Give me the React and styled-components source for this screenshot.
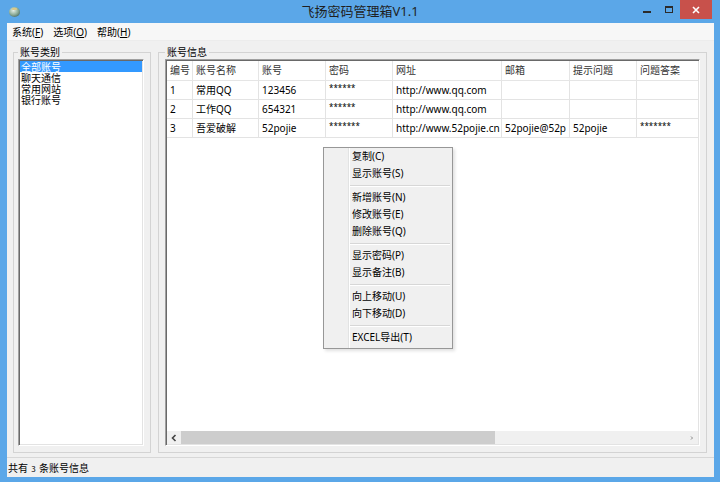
import React from 'react';
import styled, { createGlobalStyle } from 'styled-components';

const FONT = '"Noto Sans", "Noto Sans CJK SC", sans-serif';

const columns = [
  { title: '编号', width: 26 },
  { title: '账号名称', width: 66 },
  { title: '账号', width: 67 },
  { title: '密码', width: 67 },
  { title: '网址', width: 109 },
  { title: '邮箱', width: 68 },
  { title: '提示问题', width: 67 },
  { title: '问题答案', width: 80 },
];

const rows = [
  ['1', '常用QQ', '123456', '******', 'http://www.qq.com', '', '', ''],
  ['2', '工作QQ', '654321', '******', 'http://www.qq.com', '', '', ''],
  ['3', '吾爱破解', '52pojie', '*******', 'http://www.52pojie.cn', '52pojie@52p', '52pojie', '*******'],
];

const categories = ['全部账号', '聊天通信', '常用网站', '银行账号'];

const menuGroups = [
  ['复制(C)', '显示账号(S)'],
  ['新增账号(N)', '修改账号(E)', '删除账号(Q)'],
  ['显示密码(P)', '显示备注(B)'],
  ['向上移动(U)', '向下移动(D)'],
  ['EXCEL导出(T)'],
];

const App = () => {
  return (
    <>
      <GlobalStyle />
      <Window>
        <TitleBar>
          <TitleLeft>
            <AppIcon />
          </TitleLeft>
          <Title>飞扬密码管理箱V1.1</Title>
          <Controls>
            <CtrlButton>
              <svg width="10" height="10" viewBox="0 0 10 10">
                <rect x="1" y="6" width="8" height="2" fill="#2b2b2b" />
              </svg>
            </CtrlButton>
            <CtrlButton>
              <svg width="10" height="10" viewBox="0 0 10 10">
                <rect x="1.5" y="1.5" width="7" height="6" fill="none" stroke="#2b2b2b" strokeWidth="1" />
                <rect x="1" y="1" width="8" height="2" fill="#2b2b2b" />
              </svg>
            </CtrlButton>
            <CloseButton>
              <svg width="10" height="10" viewBox="0 0 10 10">
                <path d="M2 2 L8 8 M8 2 L2 8" stroke="#fff" strokeWidth="1.6" />
              </svg>
            </CloseButton>
          </Controls>
        </TitleBar>

        <Client>
          <MenuBar>
            <MenuItem>系统(<u>F</u>)</MenuItem>
            <MenuItem>选项(<u>O</u>)</MenuItem>
            <MenuItem>帮助(<u>H</u>)</MenuItem>
          </MenuBar>

          <Body>
            <GroupBox $width={138}>
              <Legend>账号类别</Legend>
              <ListBox>
                {categories.map((c, i) => (
                  <ListItem key={c} $selected={i === 0}>{c}</ListItem>
                ))}
              </ListBox>
            </GroupBox>

            <GroupBox $grow>
              <Legend>账号信息</Legend>
              <ListView>
                <Grid>
                  <HeaderRow>
                    {columns.map((col) => (
                      <HeaderCell key={col.title} $width={col.width}>{col.title}</HeaderCell>
                    ))}
                  </HeaderRow>
                  {rows.map((r) => (
                    <Row key={r[0]}>
                      {r.map((v, i) => (
                        <Cell key={i} $width={columns[i].width} $stars={v.startsWith('*')}>{v}</Cell>
                      ))}
                    </Row>
                  ))}
                </Grid>
                <HScroll>
                  <ArrowBtn>
                    <svg width="8" height="8" viewBox="0 0 8 8">
                      <path d="M5.5 1 L2.5 4 L5.5 7" fill="none" stroke="#444" strokeWidth="1.6" />
                    </svg>
                  </ArrowBtn>
                  <Thumb />
                  <Track />
                  <ArrowBtn>
                    <svg width="8" height="8" viewBox="0 0 8 8">
                      <path d="M3 2.5 L4.5 4 L3 5.5" fill="none" stroke="#888" strokeWidth="1" />
                    </svg>
                  </ArrowBtn>
                </HScroll>
              </ListView>
            </GroupBox>
          </Body>

          <StatusBar>共有 <Small>3</Small> 条账号信息</StatusBar>
        </Client>

        <ContextMenu>
          {menuGroups.map((group, gi) => (
            <React.Fragment key={gi}>
              {gi > 0 && <Separator />}
              {group.map((item) => (
                <CtxItem key={item}>{item}</CtxItem>
              ))}
            </React.Fragment>
          ))}
        </ContextMenu>
      </Window>
    </>
  );
};

const AppIcon = () => (
  <svg width="13" height="13" viewBox="0 0 13 13">
    <defs>
      <radialGradient id="ic" cx="40%" cy="35%" r="70%">
        <stop offset="0" stopColor="#e6efe6" />
        <stop offset="0.6" stopColor="#8fae9a" />
        <stop offset="1" stopColor="#4f6f66" />
      </radialGradient>
    </defs>
    <ellipse cx="6.5" cy="7" rx="5.5" ry="5" fill="url(#ic)" />
    <rect x="4" y="3" width="5" height="2" rx="1" fill="#d9c98a" />
  </svg>
);

const GlobalStyle = createGlobalStyle`
  html, body {
    margin: 0;
    padding: 0;
    width: 720px;
    height: 482px;
    overflow: hidden;
  }
  body {
    font-family: ${FONT};
    font-size: 10px;
    color: #000;
  }
`;

const Window = styled.div`
  position: relative;
  width: 720px;
  height: 482px;
  background: #5ba7e8;
  display: flex;
  flex-direction: column;
`;

const TitleBar = styled.div`
  height: 23px;
  display: grid;
  grid-template-columns: 1fr auto 1fr;
  align-items: start;
`;

const TitleLeft = styled.div`
  display: flex;
  align-items: center;
  height: 22px;
  padding-left: 8px;
`;

const Title = styled.div`
  font-family: "Noto Sans", "Noto Sans CJK SC", sans-serif;
  font-size: 13px;
  line-height: 22px;
  color: #1f1f1f;
`;

const Controls = styled.div`
  display: flex;
  justify-content: flex-end;
  padding-right: 8px;
`;

const CtrlButton = styled.div`
  width: 22px;
  height: 19px;
  display: flex;
  align-items: center;
  justify-content: center;
`;

const CloseButton = styled(CtrlButton)`
  width: 32px;
  background: #c8514b;
`;

const Client = styled.div`
  flex: 1;
  margin: 0 6px 5px 7px;
  background: #f0f0f0;
  display: flex;
  flex-direction: column;
  min-height: 0;
`;

const MenuBar = styled.div`
  height: 17px;
  display: flex;
  align-items: center;
  background: #f7f7f7;
  border-bottom: 1px solid #ececec;

  u {
    text-decoration: underline;
  }
`;

const MenuItem = styled.div`
  padding: 0 5px;
  line-height: 16px;
`;

const Body = styled.div`
  flex: 1;
  display: flex;
  gap: 7px;
  padding: 4px 7px 4px 6px;
  min-height: 0;
`;

const GroupBox = styled.fieldset`
  box-sizing: border-box;
  margin: 0;
  padding: 0 6px 6px ${(p) => (p.$grow ? 6 : 4)}px;
  border: 1px solid #d3d3d3;
  width: ${(p) => (p.$width ? `${p.$width}px` : 'auto')};
  flex: ${(p) => (p.$grow ? 1 : 'none')};
  display: flex;
  flex-direction: column;
  min-width: 0;
`;

const Legend = styled.legend`
  padding: 0 2px;
  font-size: 10px;
  line-height: 14px;
`;

const sunken = `
  border-style: solid;
  border-width: 1px;
  border-color: #a0a0a0 #ffffff #ffffff #a0a0a0;
  box-shadow: inset 1px 1px 0 #696969, inset -1px -1px 0 #e3e3e3;
  padding: 1px;
`;

const ListBox = styled.div`
  flex: 1;
  background: #fff;
  ${sunken}
  display: flex;
  flex-direction: column;
`;

const ListItem = styled.div`
  height: 11px;
  line-height: 11px;
  padding-left: 1px;
  overflow: hidden;
  font-family: "Noto Sans CJK SC", sans-serif;
  background: ${(p) => (p.$selected ? '#3399ff' : 'transparent')};
  color: ${(p) => (p.$selected ? '#fff' : '#000')};
`;

const ListView = styled.div`
  flex: 1;
  background: #fff;
  ${sunken}
  display: flex;
  flex-direction: column;
  overflow: hidden;
`;

const Grid = styled.div`
  flex: 1;
  overflow: hidden;
`;

const HeaderRow = styled.div`
  display: flex;
  height: 19px;
  border-bottom: 1px solid #e5e5e5;
`;

const HeaderCell = styled.div`
  flex: none;
  box-sizing: border-box;
  width: ${(p) => p.$width}px;
  padding-left: 3px;
  line-height: 19px;
  border-right: 1px solid #e5e5e5;
  color: #333;
  white-space: nowrap;
  overflow: hidden;
`;

const Row = styled.div`
  display: flex;
  height: 18px;
  border-bottom: 1px solid #e3e3e3;
`;

const Cell = styled.div`
  flex: none;
  box-sizing: border-box;
  width: ${(p) => p.$width}px;
  padding-left: 3px;
  line-height: ${(p) => (p.$stars ? '14px' : '18px')};
  font-size: ${(p) => (p.$stars ? '8px' : '10px')};
  border-right: 1px solid #e3e3e3;
  white-space: nowrap;
  overflow: hidden;
`;

const HScroll = styled.div`
  height: 13px;
  display: flex;
  background: #f0f0f0;
`;

const ArrowBtn = styled.div`
  width: 13px;
  display: flex;
  align-items: center;
  justify-content: center;
`;

const Thumb = styled.div`
  width: 314px;
  margin: 0 1px;
  background: #cdcdcd;
`;

const Track = styled.div`
  flex: 1;
`;

const StatusBar = styled.div`
  height: 19px;
  border-top: 1px solid #d7d7d7;
  line-height: 19px;
  padding-left: 1px;
  font-family: "Noto Sans CJK SC", sans-serif;
`;

const Small = styled.span`
  font-size: 8px;
  padding: 0 1px;
`;

const ContextMenu = styled.div`
  position: absolute;
  left: 323px;
  top: 147px;
  width: 130px;
  box-sizing: border-box;
  padding: 0 0 2px;
  background: #f0f0f0 linear-gradient(to right, transparent 24px, #e2e3e3 24px, #e2e3e3 25px, #fff 25px, #fff 26px, transparent 26px);
  border: 1px solid #979797;
  box-shadow: 2px 2px 3px rgba(0, 0, 0, 0.12);
`;

const CtxItem = styled.div`
  height: 17px;
  line-height: 17px;
  padding-left: 28px;
  color: #000;
`;

const Separator = styled.div`
  height: 7px;
  margin-left: 26px;
  margin-right: 2px;
  background: linear-gradient(to bottom, transparent 3px, #d7d7d7 3px, #d7d7d7 4px, #fff 4px, #fff 5px, transparent 5px);
`;

export default App;
